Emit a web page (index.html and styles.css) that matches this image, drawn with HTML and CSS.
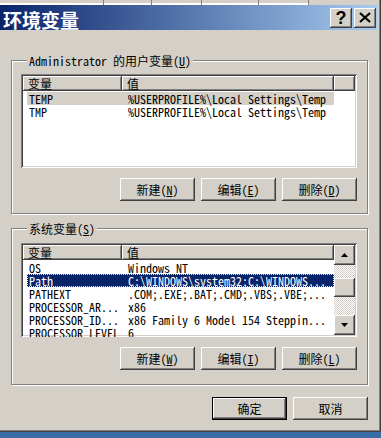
FILE: index.html
```html
<html>

<head>
  <title>环境变量</title>
  <link rel="stylesheet" href="styles.css">
</head>

<body>
  <div class="dialog">
    <div class="behind">
      <span class="tab t1"></span><span class="tab t2"></span><span class="tab t3"></span><span class="tab t4"></span><span class="tab t5"></span>
    </div>

    <div class="titlebar">
      <span class="title">环境变量</span>
      <div class="caps">
        <button class="cap">?</button>
        <button class="cap">
          <svg width="12" height="11" viewBox="0 0 12 11">
            <path d="M1 1 L11 10 M11 1 L1 10" stroke="#000" stroke-width="2.2" fill="none" />
          </svg>
        </button>
      </div>
    </div>

    <div class="client">
      <div class="group user">
        <div class="group-title">Administrator 的用户变量(<u>U</u>)</div>
        <div class="list">
          <div class="list-head">
            <div class="hcell c1">变量</div>
            <div class="hcell c2">值</div>
            <div class="hcell fill"></div>
          </div>
          <div class="row inactive"><span class="c1">TEMP</span><span class="c2">%USERPROFILE%\Local Settings\Temp</span></div>
          <div class="row"><span class="c1">TMP</span><span class="c2">%USERPROFILE%\Local Settings\Temp</span></div>
        </div>
        <div class="btn-row">
          <button class="btn">新建(<u>N</u>)</button>
          <button class="btn">编辑(<u>E</u>)</button>
          <button class="btn">删除(<u>D</u>)</button>
        </div>
      </div>

      <div class="group system">
        <div class="group-title">系统变量(<u>S</u>)</div>
        <div class="list scrolled">
          <div class="list-main">
            <div class="list-head">
              <div class="hcell c1">变量</div>
              <div class="hcell c2">值</div>
            </div>
            <div class="row"><span class="c1">OS</span><span class="c2">Windows_NT</span></div>
            <div class="row active"><span class="c1">Path</span><span class="c2">C:\WINDOWS\system32;C:\WINDOWS...</span></div>
            <div class="row"><span class="c1">PATHEXT</span><span class="c2">.COM;.EXE;.BAT;.CMD;.VBS;.VBE;...</span></div>
            <div class="row"><span class="c1">PROCESSOR_AR...</span><span class="c2">x86</span></div>
            <div class="row"><span class="c1">PROCESSOR_ID...</span><span class="c2">x86 Family 6 Model 154 Steppin...</span></div>
            <div class="row"><span class="c1">PROCESSOR_LEVEL</span><span class="c2">6</span></div>
          </div>
          <div class="vscroll">
            <div class="sb-btn">
              <svg width="7" height="4" viewBox="0 0 7 4"><path d="M3.5 0 L7 4 L0 4 Z" fill="#000" /></svg>
            </div>
            <div class="sb-track"><div class="sb-thumb"></div></div>
            <div class="sb-btn">
              <svg width="7" height="4" viewBox="0 0 7 4"><path d="M0 0 L7 0 L3.5 4 Z" fill="#000" /></svg>
            </div>
          </div>
        </div>
        <div class="btn-row">
          <button class="btn">新建(<u>W</u>)</button>
          <button class="btn">编辑(<u>I</u>)</button>
          <button class="btn">删除(<u>L</u>)</button>
        </div>
      </div>

      <div class="btn-row dlg">
        <button class="btn default">确定</button>
        <button class="btn">取消</button>
      </div>
    </div>
  </div>
</body>

</html>
```

FILE: styles.css
```css
* {
  box-sizing: border-box;
}

body {
  margin: 0;
  width: 381px;
  height: 438px;
  overflow: hidden;
  background: #3a6ea5;
  font-family: "Noto Sans Mono CJK SC", "Noto Sans CJK SC", monospace;
  font-size: 12px;
  color: #000;
}

.dialog {
  width: 381px;
  height: 432px;
  background: #d4d0c8;
  padding: 0 4px 4px 0;
  box-shadow: inset -1px -1px #404040, inset -2px -2px #808080;
}

/* strip of the parent window's tabs peeking above */
.behind {
  height: 5px;
  display: flex;
  background: #d4d0c8;
}

.tab {
  height: 5px;
  border-right: 1px solid #808080;
  box-shadow: inset 0 -2px #fff;
}

.t1 { width: 104px; }
.t2 { width: 48px; }
.t3 { width: 50px; }
.t4 { width: 57px; }
.t5 { width: 50px; }

.titlebar {
  height: 25px;
  background: linear-gradient(to right, #0a246a, #a6caf0);
  display: flex;
  align-items: center;
  justify-content: space-between;
  padding: 0 1px 0 3px;
}

.title {
  color: #fff;
  font-family: "Noto Sans CJK SC", sans-serif;
  font-weight: bold;
  font-size: 19px;
  line-height: 25px;
  padding-top: 3px;
}

.caps {
  display: flex;
  gap: 2px;
}

.cap {
  width: 22px;
  height: 20px;
  padding: 0;
  border: none;
  background: #d4d0c8;
  box-shadow: inset -1px -1px #404040, inset 1px 1px #fff, inset -2px -2px #808080;
  font-family: "Liberation Sans", sans-serif;
  font-weight: bold;
  font-size: 18px;
  line-height: 20px;
  display: flex;
  align-items: center;
  justify-content: center;
}

.client {
  padding: 30px 0 0 11px;
}

.group {
  width: 357px;
  border: 1px solid #808080;
  box-shadow: inset 1px 1px #fff, 1px 1px #fff;
  padding: 0 10px 12px 9px;
}

.system {
  margin-top: 14px;
  padding-bottom: 14px;
}

.group-title {
  width: fit-content;
  height: 13px;
  line-height: 13px;
  margin: -7px 0 0 6px;
  padding: 0 2px;
  background: #d4d0c8;
  white-space: nowrap;
}

.list {
  height: 94px;
  margin-top: 7px;
  padding: 2px;
  background: #fff;
  box-shadow: inset 1px 1px #808080, inset -1px -1px #fff, inset 2px 2px #404040, inset -2px -2px #d4d0c8;
  overflow: hidden;
}

.system .list {
  margin-top: 8px;
}

.scrolled {
  display: flex;
}

.list-main {
  width: 311px;
}

.list-head {
  display: flex;
  height: 15px;
  margin-bottom: 1px;
}

.hcell {
  height: 15px;
  line-height: 15px;
  padding-left: 5px;
  background: #d4d0c8;
  box-shadow: inset -1px -1px #404040, inset 1px 1px #fff, inset -2px -2px #808080;
}

.hcell.c1 { width: 99px; }
.hcell.c2 { width: 212px; }
.hcell.fill { width: 21px; }

.row {
  display: flex;
  width: 307px;
  height: 13px;
  line-height: 13px;
  margin-left: 4px;
  white-space: nowrap;
}

.row .c1 {
  width: 101px;
  padding-left: 2px;
}

.row.inactive {
  background: #d4d0c8;
}

.row.active {
  background: #0a246a;
  color: #fff;
  outline: 1px dotted #e8e4b0;
  outline-offset: -1px;
}

.vscroll {
  width: 21px;
  display: flex;
  flex-direction: column;
}

.sb-btn,
.sb-thumb {
  height: 20px;
  background: #d4d0c8;
  box-shadow: inset -1px -1px #404040, inset 1px 1px #fff, inset -2px -2px #808080;
  display: flex;
  align-items: center;
  justify-content: center;
}

.sb-track {
  flex: 1;
  padding-top: 13px;
  background: repeating-conic-gradient(#d4d0c8 0 25%, #fff 0 50%) 0 0 / 2px 2px;
}

.sb-thumb {
  height: 19px;
}

.btn-row {
  display: flex;
  justify-content: flex-end;
  gap: 6px;
  margin-top: 10px;
}

.btn {
  width: 75px;
  height: 23px;
  padding: 0;
  border: none;
  background: #d4d0c8;
  box-shadow: inset -1px -1px #404040, inset 1px 1px #fff, inset -2px -2px #808080;
  font-family: "Noto Sans Mono CJK SC", "Noto Sans CJK SC", monospace;
  font-size: 12px;
  color: #000;
}

.dlg {
  width: 357px;
  margin-top: 12px;
}

.btn.default {
  border: 1px solid #000;
  box-shadow: inset -1px -1px #404040, inset 1px 1px #fff, inset -2px -2px #808080;
}
```
